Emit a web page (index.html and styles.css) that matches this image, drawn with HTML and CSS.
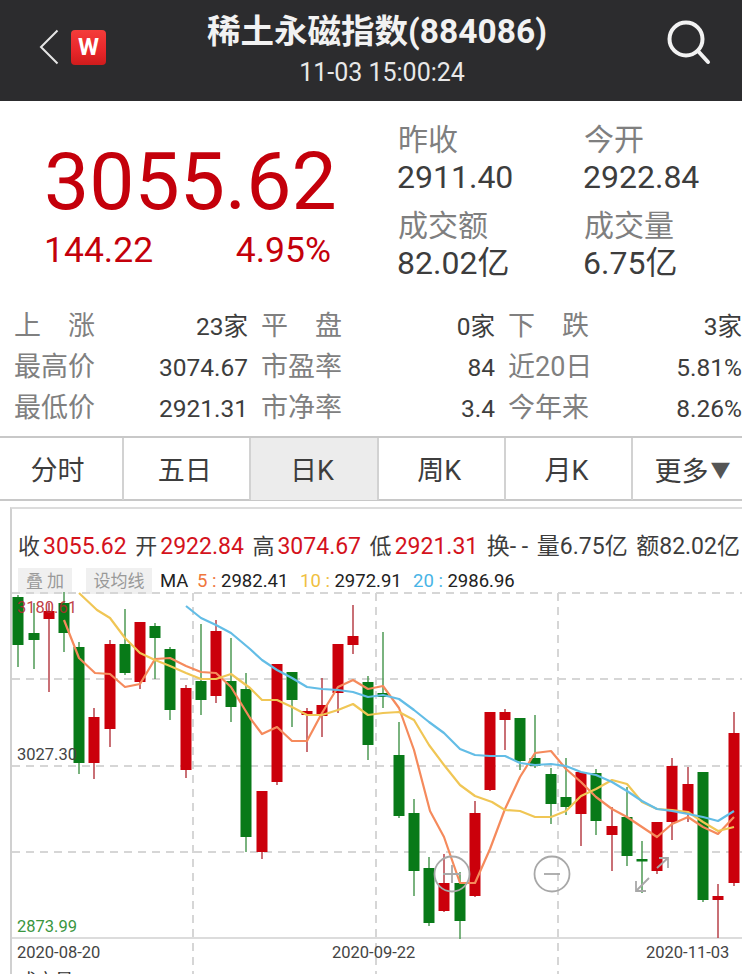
FILE: index.html
```html
<!DOCTYPE html>
<html lang="zh-CN">
  <head>
    <meta charset="UTF-8" />
    <meta name="viewport" content="width=device-width, initial-scale=1.0" />
    <title>稀土永磁指数(884086)</title>
    <link rel="stylesheet" href="styles.css">
  </head>
  <body>
    <div class="header">
      <div class="nav-left">
        <svg class="back" width="20" height="36" viewBox="0 0 20 36"><path d="M18.5 1.5 2 18l16.500 16.500" /></svg>
        <div class="wlogo">W</div>
      </div>
      <div class="head-title">
        <div class="name">稀土永磁指数(884086)</div>
        <div class="time">11-03 15:00:24</div>
      </div>
      <svg class="search" width="44" height="46" viewBox="0 0 44 46"><circle cx="19" cy="19" r="16.500" /><path d="M31 31 41 42" /></svg>
    </div>

    <div class="quote">
      <div class="price">
        <div class="last">3055.62</div>
        <div class="change"><span>144.22</span><span>4.95%</span></div>
      </div>
      <div class="summary">
        <div class="sum-item"><div class="sum-label">昨收</div><div class="sum-value">2911.40</div></div>
        <div class="sum-item"><div class="sum-label">今开</div><div class="sum-value">2922.84</div></div>
        <div class="sum-item"><div class="sum-label">成交额</div><div class="sum-value">82.02亿</div></div>
        <div class="sum-item"><div class="sum-label">成交量</div><div class="sum-value">6.75亿</div></div>
      </div>
    </div>

    <div class="stats">
      <div class="stat-row">
        <div class="cell"><span class="lab">上　涨</span><span>23家</span></div>
        <div class="cell"><span class="lab">平　盘</span><span>0家</span></div>
        <div class="cell"><span class="lab">下　跌</span><span>3家</span></div>
      </div>
      <div class="stat-row">
        <div class="cell"><span class="lab">最高价</span><span>3074.67</span></div>
        <div class="cell"><span class="lab">市盈率</span><span>84</span></div>
        <div class="cell"><span class="lab">近20日</span><span>5.81%</span></div>
      </div>
      <div class="stat-row">
        <div class="cell"><span class="lab">最低价</span><span>2921.31</span></div>
        <div class="cell"><span class="lab">市净率</span><span>3.4</span></div>
        <div class="cell"><span class="lab">今年来</span><span>8.26%</span></div>
      </div>
    </div>

    <div class="tabs">
      <div class="tab">分时</div>
      <div class="tab">五日</div>
      <div class="tab active">日K</div>
      <div class="tab">周K</div>
      <div class="tab">月K</div>
      <div class="tab more">更多<span class="arrow">▼</span></div>
    </div>

    <div class="panel">
      <div class="ohlc">
        <span>收<b>3055.62</b></span>
        <span>开<b>2922.84</b></span>
        <span>高<b>3074.67</b></span>
        <span>低<b>2921.31</b></span>
        <span class="ohlc-dark">换- -</span>
        <span class="ohlc-dark">量6.75亿</span>
        <span class="ohlc-dark">额82.02亿</span>
      </div>
      <div class="ma-row">
        <span class="chip chip-add">叠 加</span>
        <span class="chip chip-set">设均线</span>
        <span class="ma-name">MA</span>
        <span class="ma ma5"><i>5 : </i>2982.41</span>
        <span class="ma ma10"><i>10 : </i>2972.91</span>
        <span class="ma ma20"><i>20 : </i>2986.96</span>
      </div>
      <svg class="plot" width="742" height="384" viewBox="0 590 742 384">
        <!-- grid -->
        <path class="grid" d="M12 593H742M12 679H742M12 766H742M12 852H742M193 593V974M376 593V974M558 593V974" />
        <path class="axis" d="M11 938H742" />
        <!-- wicks -->
        <path class="wick-green" d="M18 595V667M34 603V669M64 592V652M79 642V774M125 609V675M155 623V679M170 647V720M201 624V715M231 638V722M246 673V852M292 672V727M368 676V760M383 632V708M399 722V818M414 799V896M429 857V926M460 872V939M520 718V770M535 715V768M551 768V824M566 758V815M596 769V835M627 787V866M642 841V893M703 772V902" />
        <path class="wick-red" d="M49 603V692M94 708V779M110 640V747M140 622V689M186 685V778M216 620V703M262 791V859M277 664V785M307 708V752M322 678V737M338 644V713M353 605V654M444 854V912M475 801V897M490 712V791M505 709V750M581 772V846M612 807V871M657 822V874M672 758V840M688 767V822M718 884V938M734 712V886" />
        <!-- bodies -->
        <g class="body-green">
          <rect x="12.500" y="597" width="11" height="48" />
          <rect x="28.500" y="633" width="11" height="7" />
          <rect x="58.500" y="603" width="11" height="30" />
          <rect x="73.500" y="647" width="11" height="116" />
          <rect x="119.500" y="644" width="11" height="29" />
          <rect x="149.500" y="626" width="11" height="12" />
          <rect x="164.500" y="649" width="11" height="61" />
          <rect x="195.500" y="681" width="11" height="19" />
          <rect x="225.500" y="681" width="11" height="26" />
          <rect x="240.500" y="689" width="11" height="148" />
          <rect x="286.500" y="672" width="11" height="28" />
          <rect x="362.500" y="682" width="11" height="63" />
          <rect x="377.500" y="693" width="11" height="4" />
          <rect x="393.500" y="755" width="11" height="61" />
          <rect x="408.500" y="813" width="11" height="58" />
          <rect x="423.500" y="868" width="11" height="55" />
          <rect x="454.500" y="883" width="11" height="38" />
          <rect x="514.500" y="718" width="11" height="43" />
          <rect x="529.500" y="758" width="11" height="8" />
          <rect x="545.500" y="774" width="11" height="30" />
          <rect x="560.500" y="797" width="11" height="10" />
          <rect x="590.500" y="773" width="11" height="48" />
          <rect x="621.500" y="817" width="11" height="39" />
          <rect x="636.500" y="859" width="11" height="2.500" />
          <rect x="697.500" y="772" width="11" height="128" />
        </g>
        <g class="body-red">
          <rect x="43.500" y="611" width="11" height="8" />
          <rect x="88.500" y="717" width="11" height="46" />
          <rect x="104.500" y="644" width="11" height="85" />
          <rect x="134.500" y="622" width="11" height="60" />
          <rect x="180.500" y="688" width="11" height="82" />
          <rect x="210.500" y="631" width="11" height="65" />
          <rect x="256.500" y="791" width="11" height="61" />
          <rect x="271.500" y="664" width="11" height="118" />
          <rect x="301.500" y="711" width="11" height="4" />
          <rect x="316.500" y="705" width="11" height="11" />
          <rect x="332.500" y="644" width="11" height="49" />
          <rect x="347.500" y="636" width="11" height="9" />
          <rect x="438.500" y="883" width="11" height="28" />
          <rect x="469.500" y="813" width="11" height="83" />
          <rect x="484.500" y="712" width="11" height="78" />
          <rect x="499.500" y="712" width="11" height="8" />
          <rect x="575.500" y="772" width="11" height="42" />
          <rect x="606.500" y="826" width="11" height="9" />
          <rect x="651.500" y="822" width="11" height="49" />
          <rect x="666.500" y="766" width="11" height="56" />
          <rect x="682.500" y="784" width="11" height="30" />
          <rect x="712.500" y="896" width="11" height="4" />
          <rect x="728.500" y="733" width="11" height="150" />
        </g>
        <!-- moving averages -->
        <polyline class="line ma5-line" points="64,620 79,658 95,673 110,674 125,687 140,684 155,659 170,658 186,666 201,672 216,673 231,687 250,718 262,734 277,727 292,741 307,741 322,713 338,687 353,680 368,689 383,686 399,708 414,750 430,811 444,837 460,883 475,883 490,849 505,809 520,777 535,753 551,751 566,769 581,782 596,797 612,809 627,817 642,827 657,837 672,824 688,817 703,827 718,834 734,817" />
        <polyline class="line ma10-line" points="79,593 97,610 110,618 125,638 140,653 155,660 170,666 186,673 201,679 216,679 231,674 250,688 262,700 277,700 292,707 307,715 322,715 338,710 353,704 368,715 383,713 399,712 414,720 429,745 444,765 460,785 475,796 492,802 505,810 520,811 535,817 551,817 566,811 581,796 596,789 612,780 627,784 642,802 657,809 672,810 688,812 703,822 718,831 734,827" />
        <polyline class="line ma20-line" points="186,606 201,618 216,625 231,633 250,649 262,660 277,670 292,678 307,687 322,689 338,690 353,692 368,697 383,695 399,699 414,710 429,722 444,733 460,749 475,755 490,756 505,756 520,763 535,765 551,764 566,766 581,772 596,775 612,782 627,791 642,801 657,809 672,811 688,814 703,817 718,821 734,811" />
        <!-- zoom buttons -->
        <g class="ctrl">
          <circle cx="452" cy="874" r="17.500" />
          <path d="M443 874H461M452 865V883" />
          <circle cx="552" cy="874" r="17.500" />
          <path d="M544 874H560" />
          <path d="M649 878 636 891M636 881V891H646M657 868 668 858M659 858H668V868" />
        </g>
        <!-- price and date labels -->
        <text class="lbl lbl-high" x="17" y="613">3180.61</text>
        <text class="lbl" x="17" y="760">3027.30</text>
        <text class="lbl lbl-low" x="17" y="932">2873.99</text>
        <text class="lbl" x="17" y="958">2020-08-20</text>
        <text class="lbl" x="332" y="958">2020-09-22</text>
        <text class="lbl" x="646" y="958">2020-11-03</text>
        <!-- next row, cut off by the window -->
        <text class="vol" x="18" y="987">成交量 MA</text>
        <text class="vol vol-y" x="200" y="987">5:</text>
        <text class="vol" x="250" y="987">6.02</text>
        <text class="vol vol-y" x="290" y="987">10:</text>
        <text class="vol" x="330" y="987">7.11</text>
        <text class="vol vol-b" x="390" y="987">20:</text>
        <text class="vol" x="420" y="987">6.43</text>
      </svg>
    </div>
  </body>
</html>
```

FILE: styles.css
```css
* {
  box-sizing: border-box;
}
html,
body {
  margin: 0;
  padding: 0;
  height: 974px;
  overflow: hidden;
}
body {
  width: 742px;
  background: #fff;
  color: #3d3d3d;
  font-family: Roboto, "Noto Sans CJK SC", sans-serif;
}

/* top bar */
.header {
  height: 101px;
  background: #2c2c2e;
  display: flex;
  align-items: flex-start;
  padding-left: 39px;
  color: #f2f2f2;
}
.nav-left {
  width: 168px;
  display: flex;
  align-items: center;
  gap: 12px;
  padding-top: 29px;
}
.back {
  fill: none;
  stroke: #e6e6e6;
  stroke-width: 2;
}
.wlogo {
  width: 35px;
  height: 35px;
  border-radius: 4px;
  background: linear-gradient(180deg, #f43c3a 0%, #e8262a 60%, #cf1c1c 100%);
  color: #fff;
  font-size: 24px;
  font-weight: 700;
  line-height: 35px;
  text-align: center;
}
.head-title {
  width: 340px;
  text-align: center;
}
.name {
  margin-top: 11px;
  font-size: 33.500px;
  font-weight: 700;
  line-height: 42px;
  white-space: nowrap;
}
.time {
  padding-left: 10px;
  font-size: 25px;
  line-height: 40px;
  color: #e8e8e8;
}
.search {
  margin: 20px 0 0 120px;
  fill: none;
  stroke: #f2f2f2;
  stroke-width: 4;
  stroke-linecap: round;
}

/* quote */
.quote {
  height: 205px;
  display: flex;
}
.price {
  width: 397px;
  padding: 40px 66px 0 44px;
  color: #c4000b;
}
.last {
  font-size: 80.500px;
  line-height: 82px;
  white-space: nowrap;
}
.change {
  margin-top: 7px;
  display: flex;
  justify-content: space-between;
  font-size: 35.500px;
  line-height: 40px;
}
.summary {
  padding-top: 20px;
  display: grid;
  grid-template-columns: 186px 150px;
  grid-auto-rows: 74px;
  row-gap: 12px;
}
.sum-label {
  padding-left: 1px;
  font-size: 30px;
  line-height: 38px;
  color: #7f7f7f;
}
.sum-value {
  font-size: 32px;
  line-height: 36px;
  white-space: nowrap;
}

/* constituents table */
.stats {
  height: 132px;
  border-bottom: 2px solid #c8c8c8;
}
.stat-row {
  height: 41px;
  padding-left: 14px;
  display: grid;
  grid-template-columns: repeat(3, 234px);
  column-gap: 13px;
  font-size: 24.500px;
  line-height: 41px;
}
.cell {
  display: flex;
  justify-content: space-between;
  white-space: nowrap;
}
.lab {
  font-size: 27px;
  color: #808080;
}

/* period tabs */
.tabs {
  height: 63px;
  display: grid;
  grid-template-columns: 122px repeat(4, 127.300px) 1fr;
  border-bottom: 2px solid #c8c8c8;
}
.tab {
  padding: 6px 4px 0 0;
  border-left: 2px solid #d2d2d2;
  font-size: 27px;
  line-height: 55px;
  text-align: center;
  white-space: nowrap;
}
.tab:first-child {
  padding-right: 7px;
  border-left: 0;
}
.active {
  background: #ececec;
}
.more {
  padding-left: 14px;
}
.arrow {
  font-size: 20px;
  margin-left: 2px;
  vertical-align: 3px;
  color: #555;
}

/* chart */
.panel {
  margin: 6px 0 0 10px;
  border-top: 2px solid #dcdcdc;
  border-left: 2px solid #d0d0d0;
  height: 467px;
}
.ohlc {
  margin-top: 24px;
  width: 728px;
  padding-left: 6px;
  display: flex;
  justify-content: space-between;
  font-size: 22px;
  line-height: 28px;
  white-space: nowrap;
}
.ohlc b {
  margin-left: 3px;
  font-size: 23px;
  font-weight: 400;
  color: #d4121c;
}
.ohlc-dark {
  font-size: 23px;
}
.ma-row {
  margin-top: 7px;
  height: 26px;
  padding-left: 6px;
  display: flex;
  align-items: center;
  font-size: 18.500px;
  white-space: nowrap;
  color: #222;
}
.chip {
  height: 26px;
  background: #f0f0f0;
  color: #999;
  font-size: 17px;
  line-height: 26px;
  text-align: center;
}
.chip-add {
  width: 54px;
}
.chip-set {
  width: 66px;
  margin-left: 14px;
}
.ma-name {
  width: 37px;
  margin-left: 8px;
}
.ma {
  width: 103px;
}
.ma i {
  font-style: normal;
}
.ma5 i {
  color: #f0773c;
}
.ma10 {
  width: 113px;
}
.ma10 i {
  color: #f0c040;
}
.ma20 i {
  color: #49b4e6;
}
.plot {
  display: block;
  margin: -4px 0 0 -12px;
}
.grid {
  fill: none;
  stroke: #d6d6d6;
  stroke-width: 2;
  stroke-dasharray: 8 6;
}
.axis {
  fill: none;
  stroke: #d0d0d0;
  stroke-width: 1.500;
}
.wick-green {
  fill: none;
  stroke: #4f9a55;
  stroke-width: 1.500;
}
.wick-red {
  fill: none;
  stroke: #b8414a;
  stroke-width: 1.500;
}
.body-green {
  fill: #087a18;
}
.body-red {
  fill: #cb000b;
}
.line {
  fill: none;
  stroke-width: 2.200;
  stroke-linejoin: round;
}
.ma5-line {
  stroke: #f58a5c;
}
.ma10-line {
  stroke: #f0c655;
}
.ma20-line {
  stroke: #63bde6;
}
.ctrl {
  fill: none;
  stroke: #a8a8a8;
  stroke-width: 1.800;
}
.lbl {
  font-size: 16.500px;
  fill: #444;
}
.lbl-high {
  fill: #b8282e;
  fill-opacity: 0.9;
}
.lbl-low {
  fill: #3a963f;
}
.vol {
  font-size: 18.500px;
  fill: #333;
}
.vol-y {
  fill: #f0c655;
}
.vol-b {
  fill: #63bde6;
}
```
